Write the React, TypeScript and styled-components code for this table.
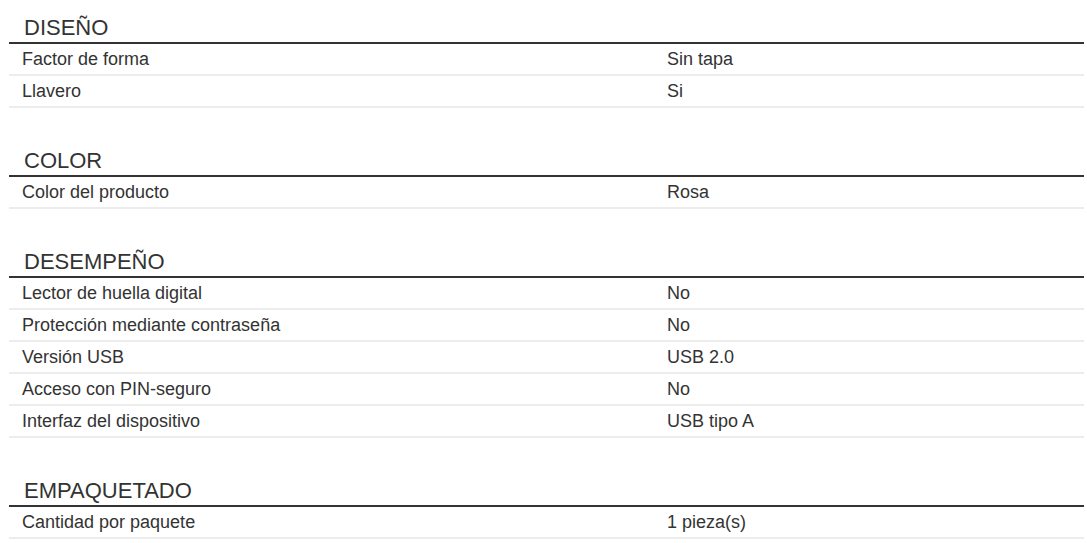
import React from "react";
import styled, { createGlobalStyle } from "styled-components";

const Global = createGlobalStyle`
  html, body { margin: 0; padding: 0; background: #ffffff; }
  body { font-family: "Liberation Sans", Arial, sans-serif; color: #333333; }
`;

const Page = styled.div`
  padding: 15px 3px 4px 9px;
  display: flex;
  flex-direction: column;
`;

const Section = styled.section`
  display: flex;
  flex-direction: column;
  & + & { margin-top: 40px; }
`;

const Heading = styled.h3`
  margin: 0;
  padding: 0 0 1px 15px;
  font-size: 22px;
  line-height: 26px;
  font-weight: 400;
  color: #333333;
  border-bottom: 2px solid #333333;
`;

const Row = styled.div`
  display: grid;
  grid-template-columns: 645px 1fr;
  padding-left: 13px;
  height: 30px;
  align-items: center;
  font-size: 18px;
  line-height: 30px;
  color: #333333;
  border-bottom: 2px solid #ececec;
`;

const Cell = styled.span`
  white-space: nowrap;
`;

type Spec = { title: string; rows: [string, string][] };

const specs: Spec[] = [
  { title: "DISEÑO", rows: [["Factor de forma", "Sin tapa"], ["Llavero", "Si"]] },
  { title: "COLOR", rows: [["Color del producto", "Rosa"]] },
  {
    title: "DESEMPEÑO",
    rows: [
      ["Lector de huella digital", "No"],
      ["Protección mediante contraseña", "No"],
      ["Versión USB", "USB 2.0"],
      ["Acceso con PIN-seguro", "No"],
      ["Interfaz del dispositivo", "USB tipo A"],
    ],
  },
  { title: "EMPAQUETADO", rows: [["Cantidad por paquete", "1 pieza(s)"]] },
];

export default function App() {
  return (
    <>
      <Global />
      <Page>
        {specs.map((s) => (
          <Section key={s.title}>
            <Heading>{s.title}</Heading>
            {s.rows.map(([k, v]) => (
              <Row key={k}>
                <Cell>{k}</Cell>
                <Cell>{v}</Cell>
              </Row>
            ))}
          </Section>
        ))}
      </Page>
    </>
  );
}
